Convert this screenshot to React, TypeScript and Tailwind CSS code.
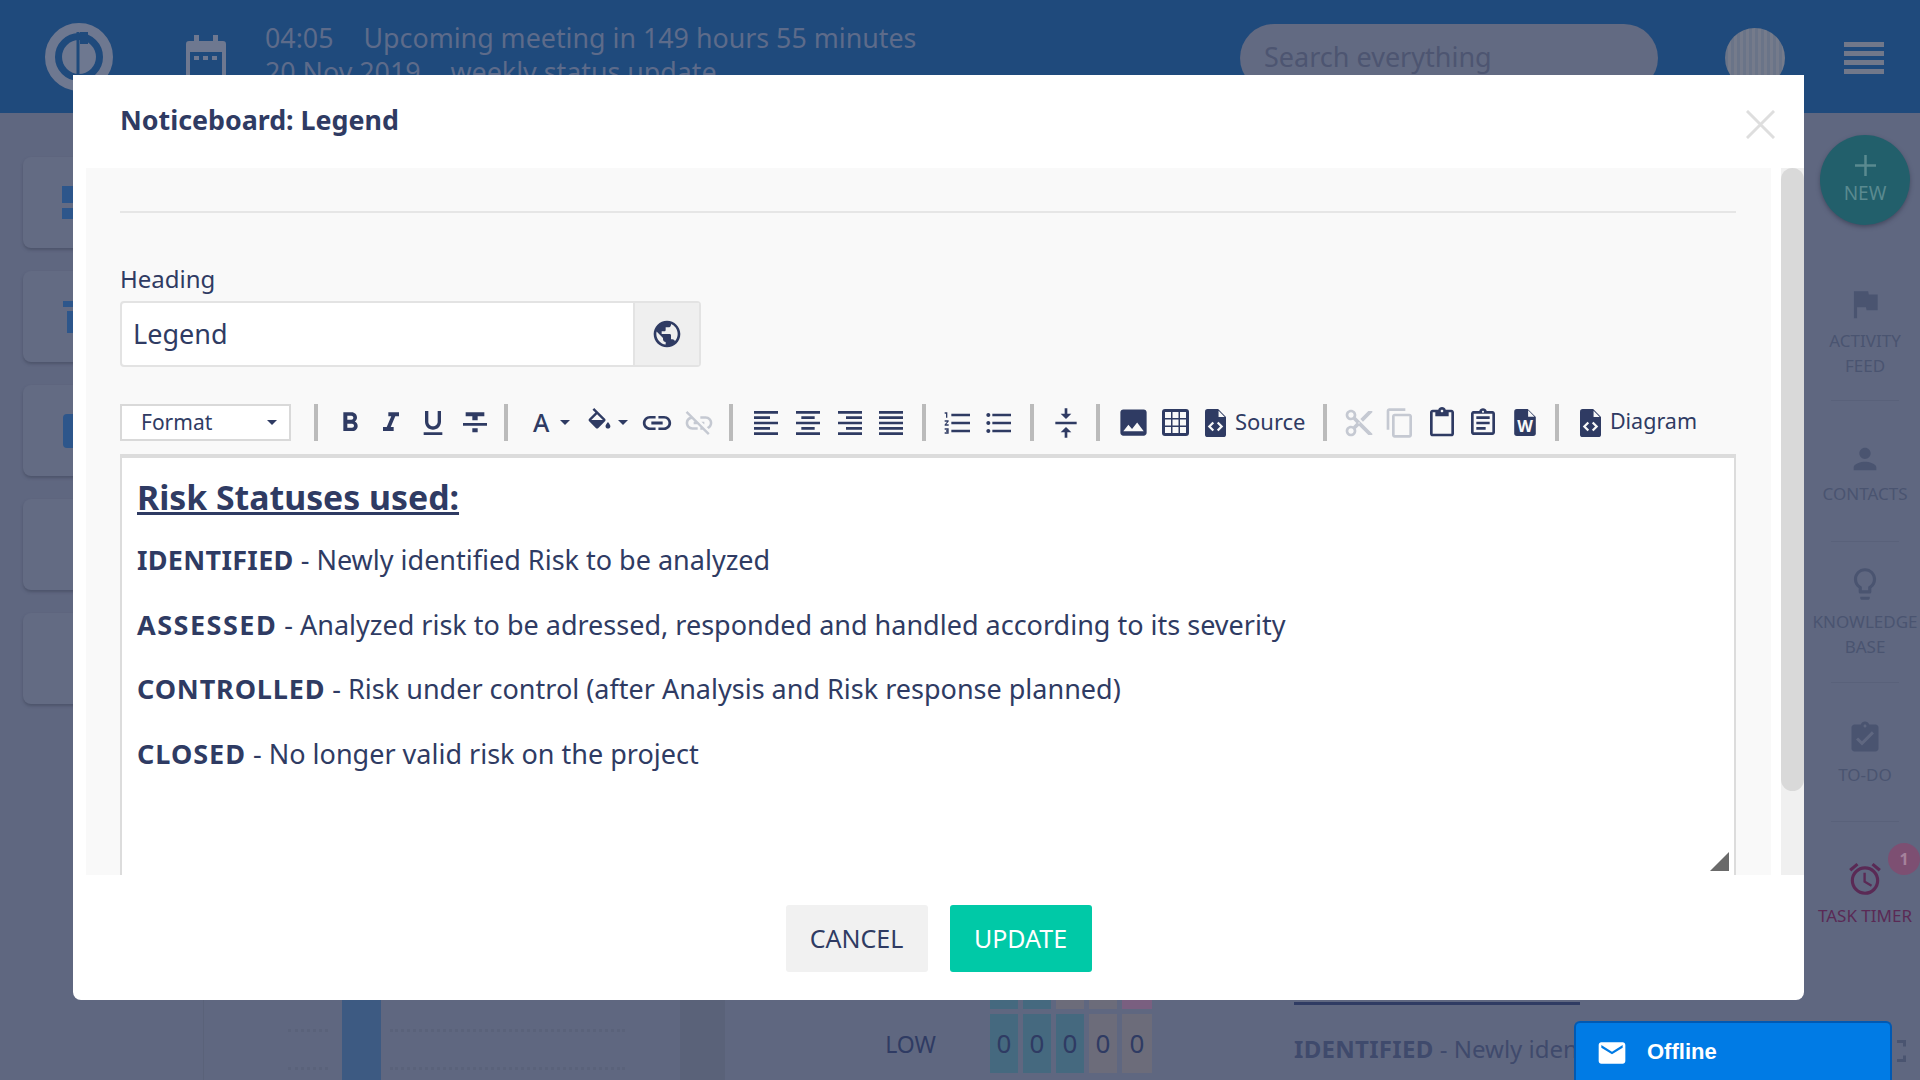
import type { ReactNode } from "react";
import {
  MdAssignmentTurnedIn,
  MdContentCopy,
  MdContentCut,
  MdEmail,
  MdFlag,
  MdFormatAlignCenter,
  MdFormatAlignJustify,
  MdFormatAlignLeft,
  MdFormatAlignRight,
  MdFormatBold,
  MdFormatItalic,
  MdFormatListBulleted,
  MdFormatListNumbered,
  MdFormatStrikethrough,
  MdFormatUnderlined,
  MdImage,
  MdLink,
  MdLinkOff,
  MdOutlineAccessAlarm,
  MdOutlineAssignment,
  MdOutlineContentPaste,
  MdOutlineLightbulb,
  MdPerson,
  MdPublic,
  MdVerticalAlignCenter,
} from "react-icons/md";

const font = "font-['Noto_Sans','Open_Sans',sans-serif]";

// dimmed side rail behind the modal
const railItems = [
  { icon: <MdFlag size={38} />, lines: ["ACTIVITY", "FEED"], box: "h-[116px]", gap: "mt-[5px]" },
  { icon: <MdPerson size={34} />, lines: ["CONTACTS"], box: "h-[141px] pt-[41px]", gap: "mt-[5px]" },
  { icon: <MdOutlineLightbulb size={38} />, lines: ["KNOWLEDGE", "BASE"], box: "h-[141px] pt-[23px]", gap: "mt-[6px]" },
  { icon: <MdAssignmentTurnedIn size={36} />, lines: ["TO-DO"], box: "h-[139px] pt-[37px]", gap: "mt-[6px]" },
];

const Sep = () => <div className="h-[37px] w-1 shrink-0 bg-[#bbbbbb]" />;

const Tool = ({ children, off }: { children: ReactNode; off?: boolean }) => (
  <div className={`flex h-[37px] w-[41.6px] items-center justify-center ${off ? "text-[#c5c9d2]" : "text-[#2f3b63]"}`}>
    {children}
  </div>
);

const Caret = () => (
  <span className="h-0 w-0 border-x-[5px] border-t-[5px] border-x-transparent border-t-[#2f3b63]" />
);

const FillIcon = () => (
  <svg width="29" height="29" viewBox="0 0 24 24" fill="#2f3b63">
    <path d="M16.56 8.94L7.62 0 6.21 1.41l2.38 2.38-5.15 5.15c-.59.59-.59 1.54 0 2.12l5.5 5.5c.29.29.68.44 1.06.44s.77-.15 1.06-.44l5.5-5.5c.59-.58.59-1.53 0-2.11zM5.21 10L10 5.21 14.79 10H5.21zM19 11.5s-2 2.17-2 3.5c0 1.1.9 2 2 2s2-.9 2-2c0-1.33-2-3.5-2-3.5z" />
  </svg>
);

const TableIcon = () => (
  <svg width="27" height="27" viewBox="0 0 27 27">
    <rect width="27" height="27" rx="3" fill="#2f3b63" />
    {[3, 10.5, 18].map((y) =>
      [3, 10.5, 18].map((x) => <rect key={`${x}-${y}`} x={x} y={y} width="6" height="6" fill="#f9f9f9" />)
    )}
  </svg>
);

const CodeFile = () => (
  <svg width="21" height="28" viewBox="0 0 24 32" fill="#2f3b63">
    <path d="M3 0h12l9 9v20a3 3 0 0 1-3 3H3a3 3 0 0 1-3-3V3a3 3 0 0 1 3-3z" />
    <path d="M15.5 2v7h7z" fill="#f9f9f9" />
    <path d="M9.5 15.5l-4.5 4.5 4.5 4.5M14.5 15.5l4.5 4.5-4.5 4.5" fill="none" stroke="#f9f9f9" strokeWidth="2.6" />
  </svg>
);

const WordFile = () => (
  <svg width="22" height="27" viewBox="0 0 24 30" fill="#2f3b63">
    <path d="M3 0h12l9 9v18a3 3 0 0 1-3 3H3a3 3 0 0 1-3-3V3a3 3 0 0 1 3-3z" />
    <path d="M15.5 1.5v7h7z" fill="#f9f9f9" />
    <text x="12" y="26" textAnchor="middle" fontSize="18" fontWeight="700" fill="#f9f9f9" fontFamily="Noto Sans">
      W
    </text>
  </svg>
);

const Toolbar = () => (
  <div className="mt-[37px] flex h-[37px] items-center text-[#2f3b63]">
    <div className="flex h-[37px] w-[171px] shrink-0 items-center justify-between border-2 border-[#d9d9d9] bg-white pl-[19px] pr-[12px] text-[21px] leading-none">
      Format
      <Caret />
    </div>
    <div className="w-[23px]" />
    <Sep />
    <div className="w-[11px]" />
    <Tool><MdFormatBold size={32} /></Tool>
    <Tool><MdFormatItalic size={32} /></Tool>
    <Tool><MdFormatUnderlined size={32} /></Tool>
    <Tool><MdFormatStrikethrough size={32} /></Tool>
    <div className="w-[9px]" />
    <Sep />
    <div className="flex h-[37px] w-[62px] items-center justify-end gap-[11px]">
      <span className="text-[25px] font-medium leading-none">A</span>
      <Caret />
    </div>
    <div className="flex h-[37px] w-[58px] items-center justify-end gap-[4px]">
      <FillIcon />
      <Caret />
    </div>
    <div className="w-[8px]" />
    <Tool><MdLink size={34} /></Tool>
    <Tool off><MdLinkOff size={32} /></Tool>
    <div className="w-[9px]" />
    <Sep />
    <div className="w-[13px]" />
    <Tool><MdFormatAlignLeft size={32} /></Tool>
    <Tool><MdFormatAlignCenter size={32} /></Tool>
    <Tool><MdFormatAlignRight size={32} /></Tool>
    <Tool><MdFormatAlignJustify size={32} /></Tool>
    <div className="w-[10px]" />
    <Sep />
    <div className="w-[11px]" />
    <Tool><MdFormatListNumbered size={32} /></Tool>
    <Tool><MdFormatListBulleted size={32} /></Tool>
    <div className="w-[10px]" />
    <Sep />
    <div className="w-[11px]" />
    <Tool><MdVerticalAlignCenter size={32} /></Tool>
    <div className="w-[9px]" />
    <Sep />
    <div className="w-[13px]" />
    <Tool><MdImage size={35} /></Tool>
    <Tool><TableIcon /></Tool>
    <div className="flex w-[123px] items-center gap-[9px] pl-[9px]">
      <CodeFile />
      <span className="-mt-[4px] text-[22px] leading-none">Source</span>
    </div>
    <div className="w-[4px]" />
    <Sep />
    <div className="w-[11px]" />
    <Tool off><MdContentCut size={32} /></Tool>
    <Tool off><MdContentCopy size={32} /></Tool>
    <Tool><MdOutlineContentPaste size={32} /></Tool>
    <Tool><MdOutlineAssignment size={32} /></Tool>
    <Tool><WordFile /></Tool>
    <div className="w-[9px]" />
    <Sep />
    <div className="flex items-center gap-[9px] pl-[21px]">
      <CodeFile />
      <span className="-mt-[4px] text-[21.5px] leading-none">Diagram</span>
    </div>
  </div>
);

const legend = [
  { term: "IDENTIFIED", spacing: "tracking-[0.3px]", text: "Newly identified Risk to be analyzed" },
  { term: "ASSESSED", spacing: "tracking-[1.5px]", text: "Analyzed risk to be adressed, responded and handled according to its severity" },
  { term: "CONTROLLED", spacing: "tracking-[0.85px]", text: "Risk under control (after Analysis and Risk response planned)" },
  { term: "CLOSED", spacing: "tracking-[1px]", text: "No longer valid risk on the project" },
];

const Modal = () => (
  <div className={`absolute left-[73px] top-[75px] flex h-[925px] w-[1731px] flex-col rounded-b-[8px] bg-white text-[#2f3b63] ${font}`}>
    <div className="relative flex h-[93px] shrink-0 items-center pb-[2px] pl-[47px]">
      <h2 className="text-[26.8px] font-bold leading-none">Noticeboard: Legend</h2>
      {/* close button */}
      <svg className="absolute right-[29px] top-[35px]" width="29" height="29" viewBox="0 0 30 30" stroke="#dedede" strokeWidth="3">
        <path d="M1 1l28 28M29 1L1 29" />
      </svg>
    </div>
    <div className="flex min-h-0 flex-1">
      <div className="ml-[13px] flex w-[1685px] flex-col overflow-hidden bg-[#f9f9f9] pl-[34px] pr-[35px]">
        <div className="mt-[43px] h-[2px] shrink-0 bg-[#e6e6e6]" />
        <label className="mt-[50px] text-[24px] leading-[32px]">Heading</label>
        <div className="mt-[6px] flex h-[66px] w-[581px] shrink-0 rounded-[4px] border-2 border-[#e3e3e3]">
          <div className="flex flex-1 items-center rounded-l-[4px] bg-white pl-[11px] text-[27px]">Legend</div>
          <div className="flex w-[66px] items-center justify-center border-l-2 border-[#e3e3e3] bg-[#efefef]">
            <MdPublic size={32} />
          </div>
        </div>
        <Toolbar />
        <div className="relative mt-[13px] flex-1 border-x-2 border-t-4 border-[#dcdcdc] bg-white px-[15px] pt-[18px]">
          <h3 className="text-[33.8px] font-bold leading-[43px] underline">Risk Statuses used:</h3>
          {legend.map((row) => (
            <p key={row.term} className="mt-[18px] text-[27px] leading-[46.6px] first:mt-0">
              <strong className={row.spacing}>{row.term}</strong> - {row.text}
            </p>
          ))}
          {/* editor resize grip */}
          <svg className="absolute bottom-[4px] right-[5px]" width="19" height="19" viewBox="0 0 19 19" fill="#6a6a6a">
            <path d="M19 0v19H0z" />
          </svg>
        </div>
      </div>
      {/* modal scrollbar */}
      <div className="ml-[10px] flex w-[23px] bg-[#f0f0f0]">
        <div className="h-[623px] w-full rounded-full bg-[#d9d9d9]" />
      </div>
    </div>
    <div className="flex h-[125px] shrink-0 items-start justify-center gap-[22px] pt-[30px]">
      <button className="h-[67px] w-[142px] rounded-[3px] bg-[#f1f1f1] text-[25px]">CANCEL</button>
      <button className="h-[67px] w-[142px] rounded-[3px] bg-[#00c9a7] text-[25px] text-white">UPDATE</button>
    </div>
  </div>
);

const Logo = () => (
  <svg width="70" height="70" viewBox="0 0 70 70" className="ml-[44px] mt-[22px] shrink-0">
    <circle cx="35" cy="35" r="29" fill="none" stroke="#6e7890" strokeWidth="10" />
    <circle cx="35" cy="35" r="17" fill="#6e7890" />
    <path d="M34 10v52" stroke="#1f4a7c" strokeWidth="3" />
    <path d="M36 10h8v12h-8z" fill="#1f4a7c" />
  </svg>
);

const CalendarIcon = () => (
  <svg width="40" height="46" viewBox="0 0 40 46" className="ml-[72px] mt-[35px] shrink-0">
    <path d="M8 0h5v6h14V0h5v6h5a3 3 0 0 1 3 3v34a3 3 0 0 1-3 3H3a3 3 0 0 1-3-3V9a3 3 0 0 1 3-3h5z" fill="#6e7890" />
    <rect x="4" y="17" width="32" height="25" fill="#1f4a7c" />
    <rect x="8" y="21" width="5" height="4" fill="#6e7890" />
    <rect x="17" y="21" width="5" height="4" fill="#6e7890" />
    <rect x="26" y="21" width="5" height="4" fill="#6e7890" />
  </svg>
);

const Background = () => (
  <div className={`flex h-screen flex-col overflow-hidden bg-[#5f6780] ${font}`}>
    <header className="flex h-[113px] shrink-0 items-start bg-[#1f4a7c] text-[#5d6b8a]">
      <Logo />
      <CalendarIcon />
      <div className="ml-[39px] mt-[21px] text-[26.8px] leading-[34px]">
        <div className="flex gap-[30px]"><span>04:05</span><span>Upcoming meeting in 149 hours 55 minutes</span></div>
        <div className="flex gap-[30px]"><span>20 Nov 2019</span><span>weekly status update</span></div>
      </div>
      <div className="ml-auto mt-[24px] flex h-[68px] w-[418px] items-center rounded-full bg-[#626a82] pb-[2px] pl-[24px] text-[27px] text-[#4d5571]">
        Search everything
      </div>
      <div className="ml-[67px] mt-[28px] h-[60px] w-[60px] rounded-full bg-[#71788a] bg-[repeating-linear-gradient(90deg,#6a7488_0px,#6a7488_3px,#757b8b_3px,#757b8b_6px)]" />
      <div className="ml-[59px] mr-[36px] mt-[42px] flex w-[40px] flex-col gap-[4px]">
        <div className="h-[5px] bg-[#71788a]" />
        <div className="h-[5px] bg-[#71788a]" />
        <div className="h-[5px] bg-[#71788a]" />
        <div className="h-[5px] bg-[#71788a]" />
      </div>
    </header>
    <div className="flex min-h-0 flex-1">
      <div className="flex w-[203px] shrink-0 flex-col gap-[23px] pl-[23px] pt-[44px]">
        <div className="flex h-[91px] w-[150px] flex-col justify-center gap-[5px] rounded-[8px] bg-[#636b83] pl-[39px] shadow-[0_2px_3px_rgba(60,65,85,0.5)]">
          <div className="h-[17px] w-[34px] bg-[#2d568b]" />
          <div className="h-[11px] w-[34px] bg-[#2d568b]" />
        </div>
        <div className="flex h-[91px] w-[150px] flex-col justify-center gap-[4px] rounded-[8px] bg-[#636b83] pl-[40px] shadow-[0_2px_3px_rgba(60,65,85,0.5)]">
          <div className="h-[6px] w-[34px] bg-[#2d568b]" />
          <div className="ml-[4px] h-[22px] w-[30px] bg-[#2d568b]" />
        </div>
        <div className="flex h-[91px] w-[150px] items-center rounded-[8px] bg-[#636b83] pl-[40px] shadow-[0_2px_3px_rgba(60,65,85,0.5)]">
          <div className="h-[34px] w-[34px] rounded-[4px] bg-[#2d568b]" />
        </div>
        <div className="h-[91px] w-[150px] rounded-[8px] bg-[#636b83] shadow-[0_2px_3px_rgba(60,65,85,0.5)]" />
        <div className="h-[91px] w-[150px] rounded-[8px] bg-[#636b83] shadow-[0_2px_3px_rgba(60,65,85,0.5)]" />
      </div>
      <div className="flex min-w-0 flex-1 flex-col justify-end">
        <div className="flex h-[80px] border-l border-[#5a6279]">
          <div className="flex w-[138px] flex-col items-end gap-[35px] pr-[14px] pt-[29px]">
            <div className="h-[3px] w-[40px] border-t-[3px] border-dotted border-[#5a627a]" />
            <div className="h-[3px] w-[40px] border-t-[3px] border-dotted border-[#5a627a]" />
          </div>
          <div className="h-full w-[39px] bg-[#3d5a82]" />
          <div className="flex w-[299px] flex-col items-start gap-[35px] pl-[9px] pt-[29px]">
            <div className="h-[3px] w-[235px] border-t-[3px] border-dotted border-[#5a627a]" />
            <div className="h-[3px] w-[235px] border-t-[3px] border-dotted border-[#5a627a]" />
          </div>
          <div className="h-full w-[45px] bg-[#5a6279]" />
          <div className="flex w-[427px] items-start justify-end">
            <span className="mr-[54px] mt-[27px] text-[23px] text-[#2f3b63]">LOW</span>
            <div className="flex flex-col gap-[5px]">
              <div className="flex h-[9px] gap-[5px]">
                <span className="w-[28px] bg-[#45697f]" />
                <span className="w-[28px] bg-[#45697f]" />
                <span className="w-[28px] bg-[#6c6c7a]" />
                <span className="w-[28px] bg-[#6c6c7a]" />
                <span className="w-[30px] bg-[#7a5f80]" />
              </div>
              <div className="flex gap-[5px] text-center text-[26px] leading-[59px] text-[#2f3b63]">
                <span className="h-[59px] w-[28px] bg-[#45697f]">0</span>
                <span className="h-[59px] w-[28px] bg-[#45697f]">0</span>
                <span className="h-[59px] w-[28px] bg-[#45697f]">0</span>
                <span className="h-[59px] w-[28px] bg-[#6c6c7a]">0</span>
                <span className="h-[59px] w-[30px] bg-[#6c6c7a]">0</span>
              </div>
            </div>
          </div>
          <div className="flex-1 overflow-hidden pl-[142px] pt-[2px] text-[24px] leading-[92px] text-[#3f4a6c]">
            <div className="h-[3px] w-[286px] bg-[#2f3b63]" />
            <div className="-mt-[2px] w-[280px] overflow-hidden whitespace-nowrap">
              <strong className="tracking-[0.3px]">IDENTIFIED</strong> - Newly identified
            </div>
          </div>
        </div>
      </div>
      <aside className="flex w-[110px] shrink-0 flex-col items-center pt-[22px] text-[17px] leading-[25px] text-[#4a5470]">
        <div className="flex h-[90px] w-[90px] shrink-0 flex-col items-center justify-center gap-[6px] rounded-full bg-[#225f6b] pb-[1px] text-[#5a8a90] shadow-[0_2px_4px_rgba(50,55,75,0.6)]">
          <svg width="21" height="21" viewBox="0 0 21 21" stroke="#5a8a90" strokeWidth="2.5">
            <path d="M10.5 0v21M0 10.5h21" />
          </svg>
          <span className="text-[19px] leading-[22px]">NEW</span>
        </div>
        <div className="h-[60px] shrink-0" />
        {railItems.map((item) => (
          <div key={item.lines[0]} className={`flex w-[68px] shrink-0 flex-col items-center border-b border-[#59617a] ${item.box}`}>
            {item.icon}
            <div className={`flex flex-col items-center ${item.gap}`}>
              {item.lines.map((line) => (
                <span key={line} className="whitespace-nowrap">{line}</span>
              ))}
            </div>
          </div>
        ))}
        <div className="relative mt-[38px] flex w-full flex-col items-center text-[#5a2a55]">
          <MdOutlineAccessAlarm size={38} />
          <span className="mt-[5px] whitespace-nowrap">TASK TIMER</span>
          <span className="absolute -top-[17px] right-0 flex h-[32px] w-[32px] items-center justify-center rounded-full bg-[#7d4f72] text-[16px] font-bold text-[#a5829c]">1</span>
        </div>
      </aside>
    </div>
  </div>
);

export default function App() {
  return (
    <div className="relative h-screen overflow-hidden">
      <Background />
      <Modal />
      {/* chat widget */}
      <div className="absolute bottom-0 left-[1574px] flex h-[59px] w-[318px] items-start gap-[19px] rounded-t-[6px] border-x-2 border-t-2 border-[#0059b3] bg-[#007be5] pl-[20px] pt-[17px] font-['Liberation_Sans',sans-serif] text-[22px] font-bold leading-[24px] text-white">
        <MdEmail size={32} className="-mt-[3px]" />
        Offline
      </div>
      {/* fullscreen corner peeking out beside the chat widget */}
      <svg className="absolute bottom-[18px] left-[1892px]" width="14" height="22" viewBox="0 0 14 22" fill="none" stroke="#4a5470" strokeWidth="3">
        <path d="M5 1.5h7.5v5M5 20.5h7.5v-5" />
      </svg>
    </div>
  );
}
